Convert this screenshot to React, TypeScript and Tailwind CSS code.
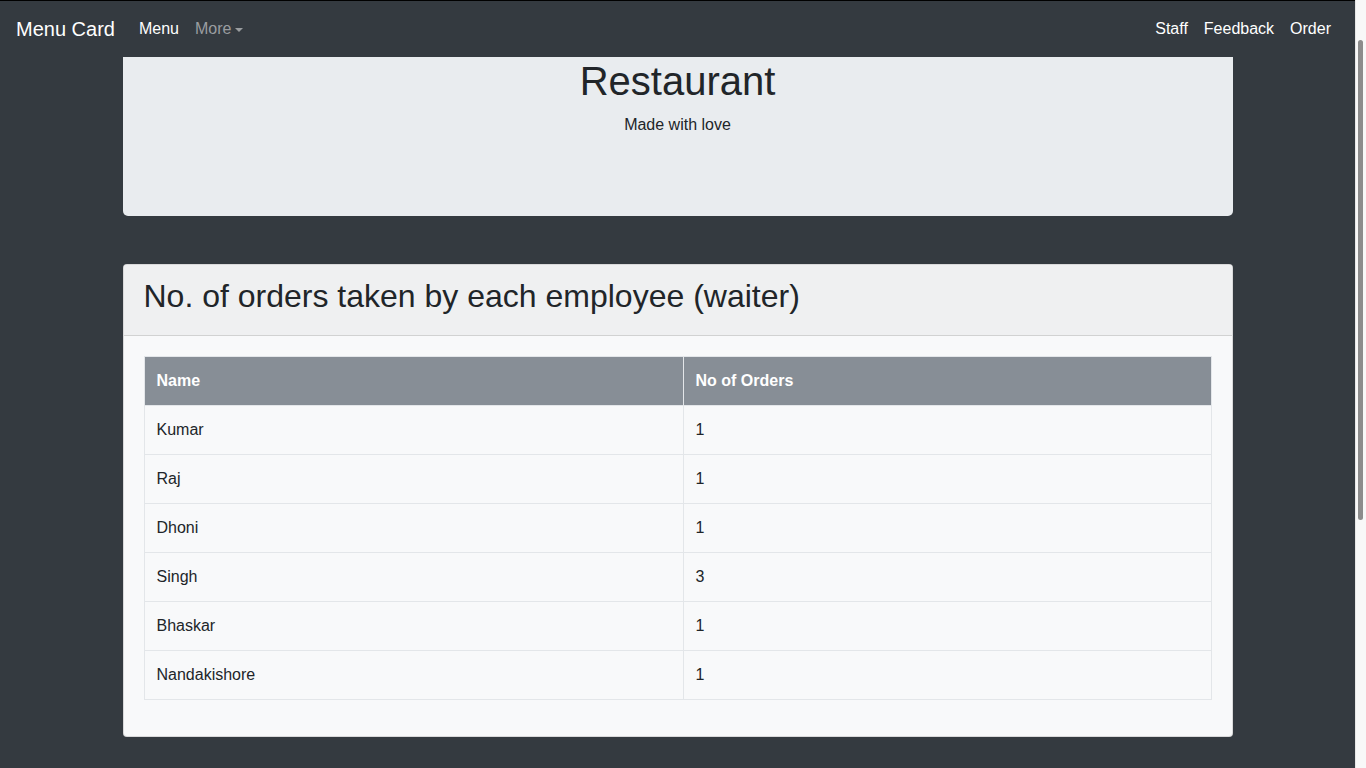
import React from "react";

const rows: [string, string][] = [
  ["Kumar", "1"],
  ["Raj", "1"],
  ["Dhoni", "1"],
  ["Singh", "3"],
  ["Bhaskar", "1"],
  ["Nandakishore", "1"],
];

export default function App() {
  return (
    <div
      className="flex h-[768px] w-full overflow-hidden bg-[#343a40] text-[#212529]"
      style={{ fontFamily: '"Liberation Sans", Arial, sans-serif' }}
    >
      <div className="flex min-w-0 flex-1 flex-col">
        <nav className="flex h-[57px] shrink-0 items-center border-t border-black bg-[#343a40] px-4">
          <span className="mr-4 text-[20px] leading-[30px] text-white">Menu Card</span>
          <span className="px-2 text-[16px] leading-6 text-white">Menu</span>
          <span className="flex items-center px-2 text-[16px] leading-6 text-[#9a9da0]">
            More
            <span className="ml-[4px] mt-[1px] h-0 w-0 border-x-[4px] border-t-[4px] border-x-transparent border-t-[#9a9da0]" />
          </span>
          <div className="ml-auto flex items-center">
            <span className="px-2 text-[16px] leading-6 text-white">Staff</span>
            <span className="px-2 text-[16px] leading-6 text-white">Feedback</span>
            <span className="px-2 text-[16px] leading-6 text-white">Order</span>
          </div>
        </nav>

        <div className="mx-auto w-[1110px]">
          <section className="rounded-b-[5px] bg-[#e9ecef] px-8 pb-[63px] text-center">
            <h1 className="text-[40px] leading-[48px]">Restaurant</h1>
            <p className="mb-4 mt-2 text-[16px] leading-6">Made with love</p>
          </section>

          <div className="mt-12 overflow-hidden rounded-[4px] border border-[rgba(0,0,0,0.125)] bg-[#f8f9fa]">
            <div className="border-b border-[rgba(0,0,0,0.125)] bg-[#eff0f1] px-5 py-3">
              <h2 className="mb-2 text-[32px] leading-[38px]">
                No. of orders taken by each employee (waiter)
              </h2>
            </div>
            <div className="p-5">
              <table className="mb-4 w-full border-collapse text-left text-[16px] leading-6">
                <thead>
                  <tr className="bg-[#878e96] text-white">
                    <th className="w-[539px] border border-[#e3e6e9] px-3 py-3 font-bold">Name</th>
                    <th className="border border-[#e3e6e9] px-3 py-3 font-bold">No of Orders</th>
                  </tr>
                </thead>
                <tbody>
                  {rows.map(([n, c]) => (
                    <tr key={n}>
                      <td className="border border-[#e3e6e9] px-3 py-3">{n}</td>
                      <td className="border border-[#e3e6e9] px-3 py-3">{c}</td>
                    </tr>
                  ))}
                </tbody>
              </table>
            </div>
          </div>
        </div>
      </div>

      <div className="flex h-full w-[11px] shrink-0 flex-col border-l border-[#e6e6e6] bg-[#f8f8f8]">
        <div className="ml-[2px] mt-[40px] h-[480px] w-[5px] rounded-full bg-[#8c8c8c]" />
      </div>
    </div>
  );
}
